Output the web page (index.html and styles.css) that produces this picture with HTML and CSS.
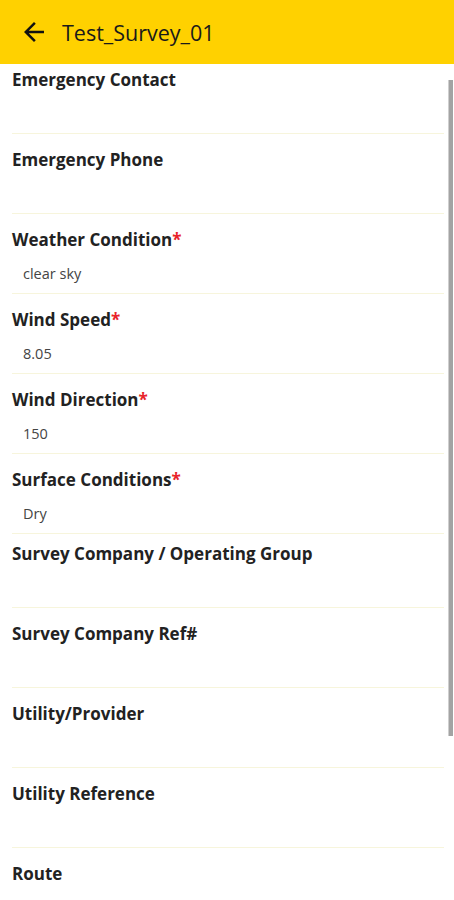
FILE: index.html
```html
<!DOCTYPE html>
<html lang="en">
<head>
  <meta charset="UTF-8">
  <meta name="viewport" content="width=device-width, initial-scale=1">
  <title>Test_Survey_01</title>
  <link rel="stylesheet" href="styles.css">
</head>
<body>
  <header class="topbar">
    <svg class="back" viewBox="0 0 24 24" width="30" height="30">
      <path d="M20 11H7.83l5.59-5.59L12 4l-8 8 8 8 1.41-1.41L7.83 13H20v-2z"/>
    </svg>
    <h1>Test_Survey_01</h1>
  </header>

  <main class="form">
    <div class="field field--cut">
      <div class="label">Emergency Contact</div>
      <div class="value"></div>
    </div>
    <div class="field">
      <div class="label">Emergency Phone</div>
      <div class="value"></div>
    </div>
    <div class="field">
      <div class="label">Weather Condition<span class="req">*</span></div>
      <div class="value">clear sky</div>
    </div>
    <div class="field">
      <div class="label">Wind Speed<span class="req">*</span></div>
      <div class="value">8.05</div>
    </div>
    <div class="field">
      <div class="label">Wind Direction<span class="req">*</span></div>
      <div class="value">150</div>
    </div>
    <div class="field">
      <div class="label">Surface Conditions<span class="req">*</span></div>
      <div class="value">Dry</div>
    </div>
    <div class="field field--tight">
      <div class="label">Survey Company / Operating Group</div>
      <div class="value"></div>
    </div>
    <div class="field">
      <div class="label">Survey Company Ref#</div>
      <div class="value"></div>
    </div>
    <div class="field">
      <div class="label">Utility/Provider</div>
      <div class="value"></div>
    </div>
    <div class="field">
      <div class="label">Utility Reference</div>
      <div class="value"></div>
    </div>
    <div class="field">
      <div class="label">Route</div>
      <div class="value"></div>
    </div>
  </main>

  <div class="scrollbar"></div>
</body>
</html>
```

FILE: styles.css
```css
html, body {
  height: 100%;
}

body {
  margin: 0;
  font-family: 'Open Sans', sans-serif;
  background: #fff;
  color: #222;
  overflow: hidden;
  position: relative;
}

.topbar {
  height: 64px;
  background: #ffd100;
  display: flex;
  align-items: center;
  padding-left: 19px;
  box-sizing: border-box;
}

.back {
  fill: #111;
  margin-right: 13px;
}

.topbar h1 {
  margin: 0;
  font-size: 21.5px;
  font-weight: 400;
  color: #1a1a1a;
}

.form {
  margin: 0 10px 0 12px;
}

.field {
  padding-top: 14px;
  border-bottom: 1px solid #f7f5dc;
}

.field--cut {
  padding-top: 4px;
}

.field--tight {
  padding-top: 8px;
}

.label {
  font-size: 17px;
  font-weight: 700;
  line-height: 24px;
  color: #222;
}

.req {
  color: #e8232a;
}

.value {
  height: 20px;
  line-height: 20px;
  margin: 12px 0 9px;
  padding-left: 11px;
  font-size: 14.5px;
  color: #444;
}

.scrollbar {
  position: absolute;
  top: 80px;
  right: 1px;
  width: 4px;
  height: 656px;
  background: #a3a3a3;
  border-left: 1px solid #cfcfcf;
}
```
